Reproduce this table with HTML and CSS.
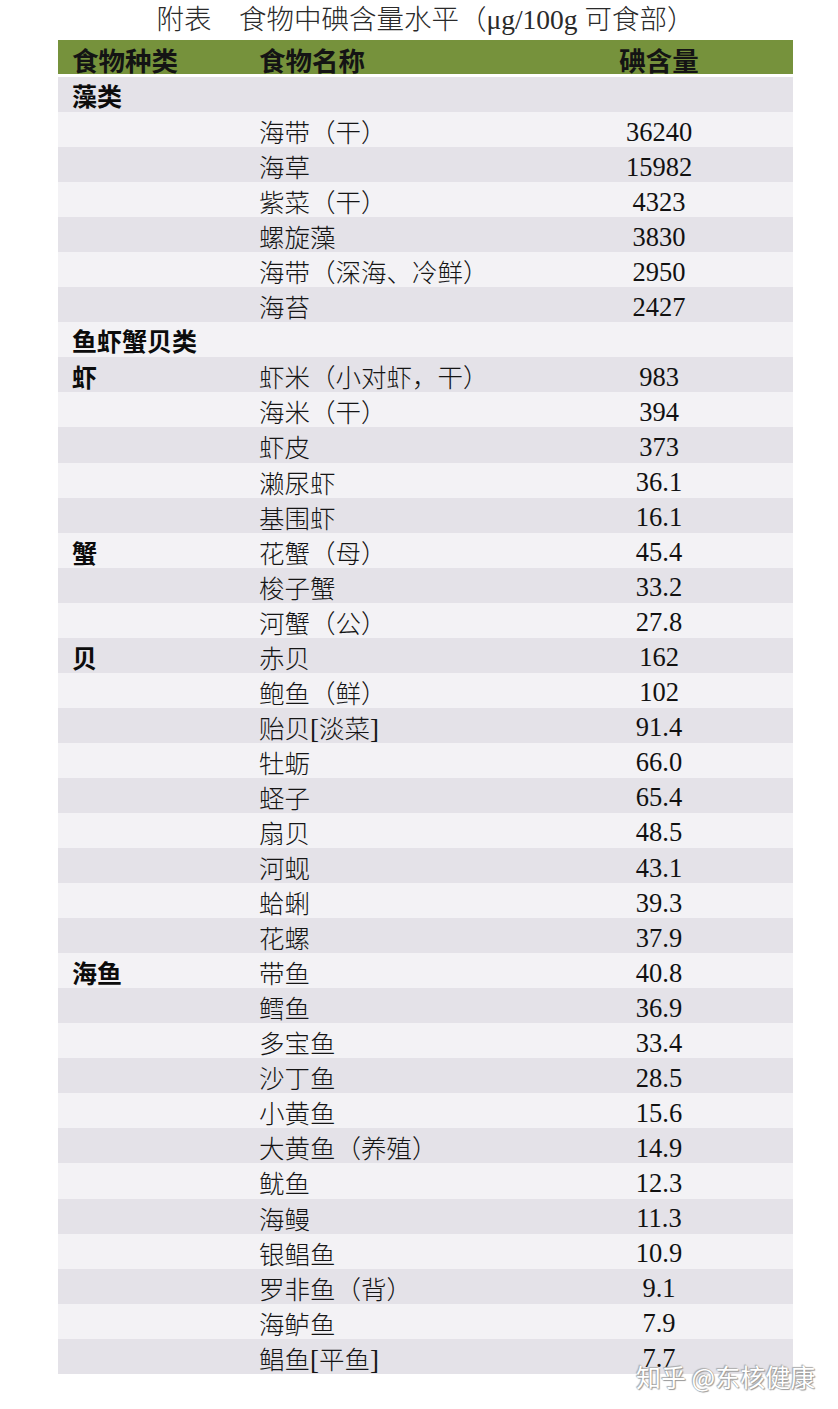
FILE: index.html
```html
<!DOCTYPE html>
<html lang="zh-CN">
<head>
<meta charset="utf-8">
<title>附表 食物中碘含量水平</title>
<link rel="stylesheet" href="styles.css">
</head>
<body>
<div class="page">
  <div class="title">附表　食物中碘含量水平（<span class="latin">μg/100g </span>可食部）</div>
  <div class="table">
    <div class="head">
      <div class="cat">食物种类</div>
      <div class="name">食物名称</div>
      <div class="val">碘含量</div>
    </div>
    <div class="rows">
      <div class="row"><div class="cat">藻类</div><div class="name"></div><div class="val"></div></div>
      <div class="row"><div class="cat"></div><div class="name">海带（干）</div><div class="val">36240</div></div>
      <div class="row"><div class="cat"></div><div class="name">海草</div><div class="val">15982</div></div>
      <div class="row"><div class="cat"></div><div class="name">紫菜（干）</div><div class="val">4323</div></div>
      <div class="row"><div class="cat"></div><div class="name">螺旋藻</div><div class="val">3830</div></div>
      <div class="row"><div class="cat"></div><div class="name">海带（深海、冷鲜）</div><div class="val">2950</div></div>
      <div class="row"><div class="cat"></div><div class="name">海苔</div><div class="val">2427</div></div>
      <div class="row"><div class="cat">鱼虾蟹贝类</div><div class="name"></div><div class="val"></div></div>
      <div class="row"><div class="cat">虾</div><div class="name">虾米（小对虾，干）</div><div class="val">983</div></div>
      <div class="row"><div class="cat"></div><div class="name">海米（干）</div><div class="val">394</div></div>
      <div class="row"><div class="cat"></div><div class="name">虾皮</div><div class="val">373</div></div>
      <div class="row"><div class="cat"></div><div class="name">濑尿虾</div><div class="val">36.1</div></div>
      <div class="row"><div class="cat"></div><div class="name">基围虾</div><div class="val">16.1</div></div>
      <div class="row"><div class="cat">蟹</div><div class="name">花蟹（母）</div><div class="val">45.4</div></div>
      <div class="row"><div class="cat"></div><div class="name">梭子蟹</div><div class="val">33.2</div></div>
      <div class="row"><div class="cat"></div><div class="name">河蟹（公）</div><div class="val">27.8</div></div>
      <div class="row"><div class="cat">贝</div><div class="name">赤贝</div><div class="val">162</div></div>
      <div class="row"><div class="cat"></div><div class="name">鲍鱼（鲜）</div><div class="val">102</div></div>
      <div class="row"><div class="cat"></div><div class="name">贻贝<span class="latin">[</span>淡菜<span class="latin">]</span></div><div class="val">91.4</div></div>
      <div class="row"><div class="cat"></div><div class="name">牡蛎</div><div class="val">66.0</div></div>
      <div class="row"><div class="cat"></div><div class="name">蛏子</div><div class="val">65.4</div></div>
      <div class="row"><div class="cat"></div><div class="name">扇贝</div><div class="val">48.5</div></div>
      <div class="row"><div class="cat"></div><div class="name">河蚬</div><div class="val">43.1</div></div>
      <div class="row"><div class="cat"></div><div class="name">蛤蜊</div><div class="val">39.3</div></div>
      <div class="row"><div class="cat"></div><div class="name">花螺</div><div class="val">37.9</div></div>
      <div class="row"><div class="cat">海鱼</div><div class="name">带鱼</div><div class="val">40.8</div></div>
      <div class="row"><div class="cat"></div><div class="name">鳕鱼</div><div class="val">36.9</div></div>
      <div class="row"><div class="cat"></div><div class="name">多宝鱼</div><div class="val">33.4</div></div>
      <div class="row"><div class="cat"></div><div class="name">沙丁鱼</div><div class="val">28.5</div></div>
      <div class="row"><div class="cat"></div><div class="name">小黄鱼</div><div class="val">15.6</div></div>
      <div class="row"><div class="cat"></div><div class="name">大黄鱼（养殖）</div><div class="val">14.9</div></div>
      <div class="row"><div class="cat"></div><div class="name">鱿鱼</div><div class="val">12.3</div></div>
      <div class="row"><div class="cat"></div><div class="name">海鳗</div><div class="val">11.3</div></div>
      <div class="row"><div class="cat"></div><div class="name">银鲳鱼</div><div class="val">10.9</div></div>
      <div class="row"><div class="cat"></div><div class="name">罗非鱼（背）</div><div class="val">9.1</div></div>
      <div class="row"><div class="cat"></div><div class="name">海鲈鱼</div><div class="val">7.9</div></div>
      <div class="row"><div class="cat"></div><div class="name">鲳鱼<span class="latin">[</span>平鱼<span class="latin">]</span></div><div class="val">7.7</div></div>
    </div>
  </div>
  <div class="watermark">知乎 @东核健康</div>
</div>
</body>
</html>
```
FILE: styles.css
```css
html, body {
  margin: 0;
  padding: 0;
  background: #ffffff;
}

.page {
  position: relative;
  width: 838px;
  height: 1409px;
  padding: 0 45px 0 58px;
  box-sizing: border-box;
  font-family: "Liberation Serif", "Noto Sans CJK SC", serif;
  color: #111;
}

.title {
  height: 40px;
  line-height: 40px;
  font-size: 27.5px;
  font-weight: 300;
  color: #2a2a2a;
  text-align: center;
  white-space: nowrap;
}

.latin {
  font-family: "Liberation Serif", serif;
}

.table {
  width: 735px;
}

.head,
.row {
  display: grid;
  grid-template-columns: 201px 272px 256px 1fr;
  align-items: center;
}

.head {
  height: 34px;
  background: #76923c;
  font-family: "Noto Sans CJK SC", sans-serif;
  font-weight: 700;
  font-size: 26.5px;
  color: #141414;
  padding-bottom: 3px;
  box-sizing: border-box;
}

.head .cat {
  padding-left: 14px;
}

.head .val {
  text-align: center;
}

.rows {
  margin-top: 3px;
}

.row {
  height: 35.06px;
  background: #f3f2f5;
}

.row:nth-child(odd) {
  background: #e4e2e8;
}

.row .cat {
  padding-left: 14px;
  font-family: "Noto Sans CJK SC", sans-serif;
  font-weight: 700;
  font-size: 25px;
  color: #0c0c0c;
  padding-bottom: 2px;
}

.row .name {
  font-family: "Noto Sans CJK SC", sans-serif;
  font-weight: 300;
  font-size: 25.5px;
  color: #151515;
  white-space: nowrap;
  padding-bottom: 3px;
}

.row .name .latin {
  font-size: 27px;
}

.row .val {
  text-align: center;
  font-family: "Liberation Serif", serif;
  font-size: 26.5px;
  color: #111;
}

.watermark {
  position: absolute;
  left: 636px;
  top: 1358px;
  font-family: "Noto Sans CJK SC", sans-serif;
  font-size: 25px;
  color: #ffffff;
  white-space: nowrap;
  text-shadow: 0 0 1px #8a8a8a, 1px 1px 1px #9a9a9a, -1px -1px 1px #b0b0b0;
}
```
